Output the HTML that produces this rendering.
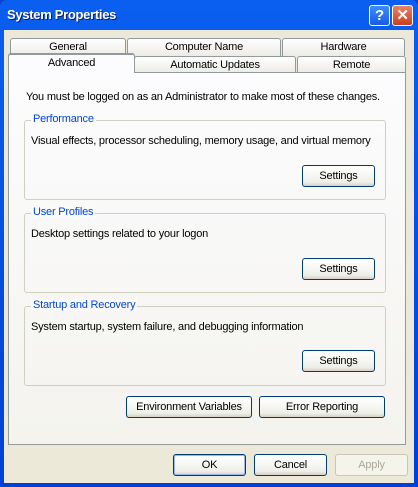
<!DOCTYPE html><html><head><style>
*{margin:0;padding:0;box-sizing:border-box}
body{width:418px;height:487px;background:#0842c8;font-family:Tahoma,"Liberation Sans",sans-serif;font-size:11px;letter-spacing:-0.2px;position:relative;overflow:hidden}
.win{position:absolute;left:0;top:0;width:418px;height:487px;background:linear-gradient(#0a5ff0,#0040d8);border-radius:7px 7px 0 0}
.title{position:absolute;left:7px;top:7px;color:#fff;font-weight:bold;font-size:13px;letter-spacing:-0.3px;text-shadow:1px 1px #0a1f6e}
.body{position:absolute;left:4px;top:30px;width:410px;height:453px;background:#ece9d8}
.tb{position:absolute;width:21px;height:21px;top:5px;border:1px solid #fff;border-radius:3px;color:#fff;font-weight:bold;text-align:center;font-size:15px;line-height:19px}
.tab{position:absolute;height:18px;border:1px solid #919b9c;border-bottom:none;border-radius:3px 3px 0 0;background:linear-gradient(#fff,#ecebe5);text-align:center;line-height:16px;color:#000}
.panel{position:absolute;left:8px;top:72px;width:398px;height:373px;border:1px solid #919b9c;background:linear-gradient(#fcfcfe,#f4f3ee)}
.grp{position:absolute;left:15px;width:362px;height:80px;border:1px solid #d0d0bf;border-radius:3px}
.grp .lg{position:absolute;left:6px;top:-8px;padding:0 2px;color:#0046d5;background:#fafafa}
.grp .tx{position:absolute;left:6px;top:14px}
.btn{position:absolute;height:22px;border:1px solid #003c74;border-radius:3px;background:linear-gradient(#fff,#f0f0ea 80%,#d6d0c5);text-align:center;line-height:20px;color:#000}
</style></head><body><div class="win">
<div class="title">System Properties</div>
<div class="tb" style="left:369px;background:linear-gradient(#3c8cff,#1a5ae6)">?</div>
<div class="tb" style="left:392px;background:linear-gradient(#e8826a,#c8401f)">✕</div>
<div class="body"></div>
<div class="tab" style="left:10px;top:38px;width:116px">General</div>
<div class="tab" style="left:127px;top:38px;width:154px">Computer Name</div>
<div class="tab" style="left:282px;top:38px;width:123px">Hardware</div>
<div class="tab" style="left:134px;top:56px;width:162px;height:17px">Automatic Updates</div>
<div class="tab" style="left:297px;top:56px;width:109px;height:17px">Remote</div>
<div class="panel">
<div style="position:absolute;left:17px;top:18px">You must be logged on as an Administrator to make most of these changes.</div>
<div class="grp" style="top:47px"><span class="lg">Performance</span><span class="tx">Visual effects, processor scheduling, memory usage, and virtual memory</span></div>
<div class="grp" style="top:140px"><span class="lg">User Profiles</span><span class="tx">Desktop settings related to your logon</span></div>
<div class="grp" style="top:233px"><span class="lg">Startup and Recovery</span><span class="tx">System startup, system failure, and debugging information</span></div>
<div class="btn" style="left:293px;top:92px;width:73px">Settings</div>
<div class="btn" style="left:293px;top:185px;width:73px">Settings</div>
<div class="btn" style="left:293px;top:277px;width:73px">Settings</div>
<div class="btn" style="left:117px;top:323px;width:126px">Environment Variables</div>
<div class="btn" style="left:250px;top:323px;width:126px">Error Reporting</div>
</div>
<div class="tab" style="left:8px;top:53px;width:127px;height:20px;background:#fcfcfe;border-top:2px solid #ffc83c;border-color:#919b9c #919b9c transparent;line-height:17px;z-index:2">Advanced</div>
<div class="btn" style="left:173px;top:454px;width:73px;border-color:#003c74;box-shadow:inset 0 0 0 1px #98b8ea">OK</div>
<div class="btn" style="left:254px;top:454px;width:73px">Cancel</div>
<div class="btn" style="left:335px;top:454px;width:73px;border-color:#c9c7ba;background:#f5f4ea;color:#aca899">Apply</div>
</div></body></html>
